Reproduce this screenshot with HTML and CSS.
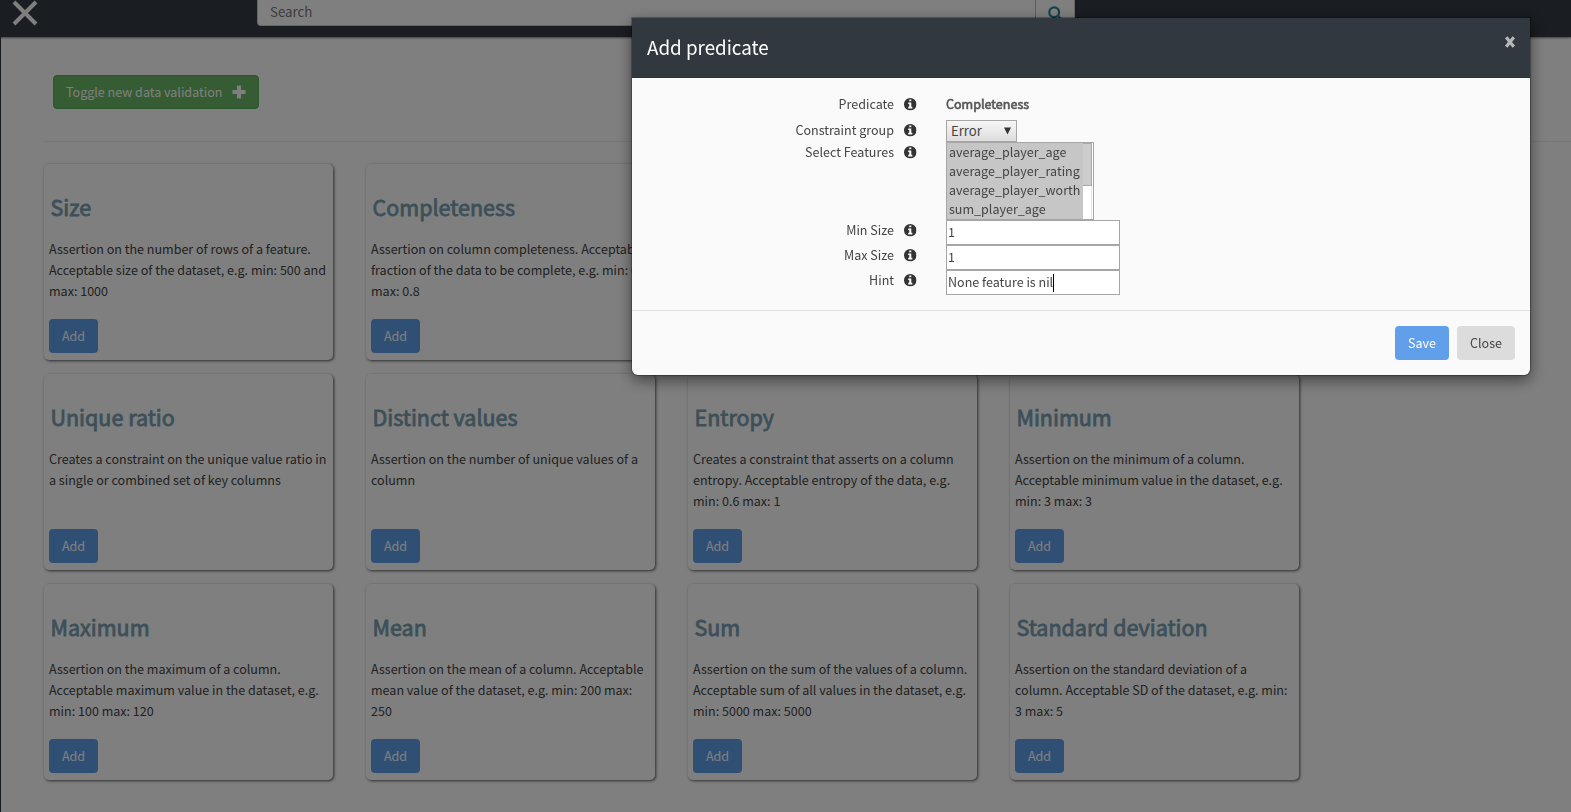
FILE: index.html
```html
<!DOCTYPE html>
<html lang="en">
<head>
<meta charset="utf-8">
<title>Data validation</title>
<link rel="stylesheet" href="styles.css">
</head>
<body>
<div class="page">
  <header class="topbar">
    <svg class="menu-close" width="26" height="26" viewBox="0 0 26 26"><path d="M2 2L24 24M24 2L2 24"/></svg>
    <div class="search">
      <div class="search-field">Search</div>
      <div class="search-button"><svg width="15" height="15" viewBox="0 0 15 15"><circle cx="6.200" cy="6.200" r="4.900"/><path d="M9.500 9.500L13.500 13.500"/></svg></div>
    </div>
  </header>
  <main class="content">
    <div class="toolbar">
      <button class="btn btn-success">Toggle new data validation <svg width="14" height="14" viewBox="0 0 14 14"><path d="M5 .5h4v4.500h4.500v4H9v4.500H5V9H.5V5H5z"/></svg></button>
    </div>
    <section class="cards">
      <article class="card"><h3>Size</h3><p>Assertion on the number of rows of a feature. Acceptable size of the dataset, e.g. min: 500 and max: 1000</p><button class="btn btn-primary">Add</button></article>
      <article class="card"><h3>Completeness</h3><p>Assertion on column completeness. Acceptable fraction of the data to be complete, e.g. min: 0.8 max: 0.8</p><button class="btn btn-primary">Add</button></article>
      <article class="card"></article>
      <article class="card"></article>
      <article class="card"><h3>Unique ratio</h3><p>Creates a constraint on the unique value ratio in a single or combined set of key columns</p><button class="btn btn-primary">Add</button></article>
      <article class="card"><h3>Distinct values</h3><p>Assertion on the number of unique values of a column</p><button class="btn btn-primary">Add</button></article>
      <article class="card"><h3>Entropy</h3><p>Creates a constraint that asserts on a column entropy. Acceptable entropy of the data, e.g. min: 0.6 max: 1</p><button class="btn btn-primary">Add</button></article>
      <article class="card"><h3>Minimum</h3><p>Assertion on the minimum of a column. Acceptable minimum value in the dataset, e.g. min: 3 max: 3</p><button class="btn btn-primary">Add</button></article>
      <article class="card"><h3>Maximum</h3><p>Assertion on the maximum of a column. Acceptable maximum value in the dataset, e.g. min: 100 max: 120</p><button class="btn btn-primary">Add</button></article>
      <article class="card"><h3>Mean</h3><p>Assertion on the mean of a column. Acceptable mean value of the dataset, e.g. min: 200 max: 250</p><button class="btn btn-primary">Add</button></article>
      <article class="card"><h3>Sum</h3><p>Assertion on the sum of the values of a column. Acceptable sum of all values in the dataset, e.g. min: 5000 max: 5000</p><button class="btn btn-primary">Add</button></article>
      <article class="card"><h3>Standard deviation</h3><p>Assertion on the standard deviation of a column. Acceptable SD of the dataset, e.g. min: 3 max: 5</p><button class="btn btn-primary">Add</button></article>
    </section>
  </main>
</div>
<svg class="defs" width="0" height="0"><symbol id="info" viewBox="0 0 12 12"><circle cx="6" cy="6" r="6" fill="#333"/><path d="M5 1.500h2v1.700H5zM4 4.200h3v4.300h1V10H4V8.500h1V5.700H4z" fill="#fafafa"/></symbol></svg>
<div class="backdrop">
  <div class="modal" role="dialog">
    <div class="modal-header"><h4>Add predicate</h4><svg class="modal-close" width="12" height="12" viewBox="0 0 12 12"><path d="M2.200 1.300L9.800 10.700M9.800 1.300L2.200 10.700"/></svg></div>
    <div class="modal-body">
      <div class="row row-text"><label>Predicate</label><svg class="info"><use href="#info"/></svg><strong>Completeness</strong></div>
      <div class="row row-select"><label>Constraint group</label><svg class="info"><use href="#info"/></svg><div class="select"><span>Error</span><svg width="7" height="8" viewBox="0 0 7 8"><path d="M0 .5h7L3.500 7.500z"/></svg></div></div>
      <div class="row row-list"><label>Select Features</label><svg class="info"><use href="#info"/></svg>
        <div class="listbox"><div class="options"><div>average_player_age</div><div>average_player_rating</div><div>average_player_worth</div><div>sum_player_age</div></div><div class="scroll"><div class="thumb"></div></div></div></div>
      <div class="row"><label>Min Size</label><svg class="info"><use href="#info"/></svg><div class="input">1</div></div>
      <div class="row"><label>Max Size</label><svg class="info"><use href="#info"/></svg><div class="input">1</div></div>
      <div class="row"><label>Hint</label><svg class="info"><use href="#info"/></svg><div class="input">None feature is nil<span class="caret"></span></div></div>
    </div>
    <div class="modal-footer"><button class="btn btn-save">Save</button><button class="btn btn-close">Close</button></div>
  </div>
</div>
</body>
</html>
```
FILE: styles.css
```css
* { box-sizing: border-box; }
body {
  margin: 0;
  height: 812px;
  overflow: hidden;
  background: #fff;
  color: #444;
  font: 12.540px/20px "Noto Sans CJK SC", "Open Sans", sans-serif;
}
h3, h4, p { margin: 0; }
.page { height: 812px; border-left: 1px solid #32383f; }
.topbar {
  display: flex;
  align-items: flex-start;
  height: 37px;
  margin-left: -1px;
  background: #343a42;
  box-shadow: 0 1px 2px rgba(0, 0, 0, .5);
}
.menu-close { flex: none; margin-left: 12px; }
.menu-close path { stroke: #fff; stroke-width: 4; fill: none; }
.search {
  display: flex;
  width: 818px;
  height: 26px;
  margin-left: 219px;
  background: #fff;
  border: 1px solid #ccc;
  border-top: 0;
  border-radius: 0 0 4px 4px;
}
.search-field { flex: 1; padding: 2px 12px; font-size: 13.3px; line-height: 19px; color: #777; }
.search-button { width: 39px; padding: 6px 11px 0 12px; border-left: 1px solid #bbb; line-height: 0; }
.search-button svg { fill: none; stroke: #1f8a94; stroke-width: 2.200; }
.toolbar { height: 105px; margin-left: 42px; padding: 38px 0 0 10px; border-bottom: 1px solid #eee; }
.btn {
  height: 34px;
  padding: 0;
  border: 1px solid transparent;
  border-radius: 4px;
  color: #fff;
  font: inherit;
}
.btn-success { display: flex; align-items: center; justify-content: space-between; width: 206px; padding: 0 12px; background: #6ab864; border-color: #58ae55; white-space: nowrap; }
.btn-success svg { flex: none; fill: #fff; }
.btn-primary { display: block; width: 49px; background: #619fea; }
.cards { display: grid; grid-template-columns: repeat(4, 289px); grid-auto-rows: 196px; gap: 14px 33px; padding: 22px 0 0 43px; }
.card {
  display: flex;
  flex-direction: column;
  padding: 28px 5px 7px;
  border-radius: 5px;
  box-shadow: 1px 1px 3px rgba(0, 0, 0, .65);
}
.card h3 { padding-left: 1.500px; color: #79a0b2; font-size: 21.500px; line-height: 30px; font-weight: 400; -webkit-text-stroke: .8px #79a0b2; }
.card p { margin-top: 16px; margin-right: -2px; line-height: 21px; }
.card .btn { margin-top: auto; }
.defs { position: absolute; }
.backdrop { position: fixed; inset: 0; padding: 18px 0 0 632px; background: rgba(0, 0, 0, .5); }
.modal { width: 898px; height: 357px; overflow: visible; background: #fafafa; border-radius: 0 0 6px 6px; box-shadow: 0 5px 15px rgba(0, 0, 0, .5), 0 0 1px 1px rgba(0, 0, 0, .3); }
.modal-header { display: flex; justify-content: space-between; height: 60px; padding: 16px 14px 0 15px; background: #32383f; border-bottom: 1px solid #2b3137; color: #fff; }
.modal-header h4 { font-size: 18.800px; line-height: 26px; font-weight: 400; }
.modal-close { margin-top: 0; transform: translateY(2px); }
.modal-close path { stroke: #b5b8ba; stroke-width: 3.200; fill: none; }
.modal-body { height: 233px; padding: 16px 0 0; border-bottom: 1px solid #e3e3e3; }
.row { display: grid; grid-template-columns: 262px 10px 12px 30px auto; height: 25px; justify-content: start; align-items: start; }
.row > label { text-align: right; grid-column: 1; }
.row > .info { grid-column: 3; width: 12.500px; height: 12.500px; margin-top: 4px; }
.row > :last-child { grid-column: 5; }
.row-text { height: 26px; }
.row-select { height: 22px; }
.row-list { height: 78px; }
.row strong { font-weight: 400; color: #555; -webkit-text-stroke: .6px #555; }
.select { display: flex; align-items: center; justify-content: space-between; width: 71px; height: 22px; padding: 0 5px 0 4px; border: 1px solid #a6a6a6; background: linear-gradient(#f6f6f6, #ddd); font-size: 13.100px; }
.select svg { fill: #333; }
.listbox { display: flex; width: 148px; height: 78px; border: 1px solid #a6a6a6; background: #fff; }
.options { flex: 1; background: #c6c6c6; line-height: 19px; padding-left: 2px; }
.options div { height: 19px; line-height: 18px; }
.scroll { flex: none; width: 9px; margin-right: 1px; border-right: 1px solid #e5e5e5; }
.thumb { width: 9px; height: 43px; border: solid #aaa; border-width: 1px 1px 1px 0; background: #ccc; }
.input { display: flex; width: 174px; height: 25px; padding: 1px 1px 0; border: 1px solid #a6a6a6; background: #fff; line-height: 20px; color: #444; }
.caret { width: 1px; height: 18px; margin-top: 2px; background: #000; }
.modal-footer { display: flex; justify-content: flex-end; gap: 8px; padding: 15px; }
.btn-save { width: 54px; background: #619fea; }
.btn-close { width: 58px; background: #dcdcdc; color: #444; }
```
